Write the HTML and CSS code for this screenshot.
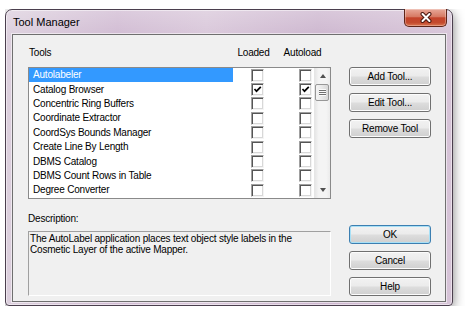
FILE: index.html
```html
<!DOCTYPE html>
<html lang="en">
<head>
  <title>Tool Manager</title>
  <meta charset="utf-8">
  <link rel="stylesheet" href="styles.css">
</head>
<body>
  <div class="window">
    <div class="titlebar">
      <span class="title">Tool Manager</span>
      <button class="close" aria-label="Close">
        <svg width="14" height="11" viewBox="0 0 14 11">
          <path d="M3.5 2 L10.5 9 M10.5 2 L3.5 9" stroke="#4a1810" stroke-width="4" stroke-linecap="round"/>
          <path d="M3.5 2 L10.5 9 M10.5 2 L3.5 9" stroke="#fff" stroke-width="2" stroke-linecap="round"/>
        </svg>
      </button>
    </div>

    <div class="client">
      <div class="main">
        <div class="list-head">
          <span>Tools</span>
          <span>Loaded</span>
          <span>Autoload</span>
        </div>

        <div class="listbox">
          <div class="rows">
            <div class="row selected"><span class="name">Autolabeler</span><span class="cell"><i class="check"></i></span><span class="cell"><i class="check"></i></span></div>
            <div class="row"><span class="name">Catalog Browser</span><span class="cell"><i class="check on"><svg width="9" height="9" viewBox="0 0 9 9"><path d="M1.5 4 L3.5 6.2 L7.8 1.8" fill="none" stroke="#000" stroke-width="1.7"/></svg></i></span><span class="cell"><i class="check on"><svg width="9" height="9" viewBox="0 0 9 9"><path d="M1.5 4 L3.5 6.2 L7.8 1.8" fill="none" stroke="#000" stroke-width="1.7"/></svg></i></span></div>
            <div class="row"><span class="name">Concentric Ring Buffers</span><span class="cell"><i class="check"></i></span><span class="cell"><i class="check"></i></span></div>
            <div class="row"><span class="name">Coordinate Extractor</span><span class="cell"><i class="check"></i></span><span class="cell"><i class="check"></i></span></div>
            <div class="row"><span class="name">CoordSys Bounds Manager</span><span class="cell"><i class="check"></i></span><span class="cell"><i class="check"></i></span></div>
            <div class="row"><span class="name">Create Line By Length</span><span class="cell"><i class="check"></i></span><span class="cell"><i class="check"></i></span></div>
            <div class="row"><span class="name">DBMS Catalog</span><span class="cell"><i class="check"></i></span><span class="cell"><i class="check"></i></span></div>
            <div class="row"><span class="name">DBMS Count Rows in Table</span><span class="cell"><i class="check"></i></span><span class="cell"><i class="check"></i></span></div>
            <div class="row"><span class="name">Degree Converter</span><span class="cell"><i class="check"></i></span><span class="cell"><i class="check"></i></span></div>
          </div>
          <div class="scrollbar">
            <div class="arrow up"></div>
            <div class="thumb"></div>
            <div class="track"></div>
            <div class="arrow down"></div>
          </div>
        </div>

        <div class="desc-label">Description:</div>
        <div class="desc">The AutoLabel application places text object style labels in the<br>Cosmetic Layer of the active Mapper.</div>
      </div>

      <div class="buttons">
        <div class="group">
          <button>Add Tool...</button>
          <button>Edit Tool...</button>
          <button>Remove Tool</button>
        </div>
        <div class="group bottom">
          <button class="default">OK</button>
          <button>Cancel</button>
          <button>Help</button>
        </div>
      </div>
    </div>
  </div>
</body>
</html>
```

FILE: styles.css
```css
* {
  box-sizing: border-box;
}
body {
  margin: 9px 0 0 5px;
  background: #fff;
  font-family: "Liberation Sans", Arial, sans-serif;
  font-size: 10px;
  letter-spacing: -0.2px;
  color: #000;
}

/* window frame */
.window {
  width: 448px;
  height: 297px;
  display: flex;
  flex-direction: column;
  padding: 0 6px 3px;
  border: 1px solid #4b3f4e;
  border-radius: 7px 7px 4px 4px;
  background:
    linear-gradient(rgba(255,255,255,.25), rgba(255,255,255,0) 30px),
    linear-gradient(90deg, #dccfdd, #d0bad2 25%, #d8c6d9 45%, #ccb5ce 70%, #d6c3d7);
  box-shadow: 0 3px 12px rgba(0,0,0,.5), inset 0 0 0 1px rgba(255,255,255,.5);
}
.titlebar {
  height: 24px;
  display: flex;
  align-items: flex-start;
}
.title {
  padding: 6px 0 0 1px;
  font-size: 11px;
  line-height: 13px;
  letter-spacing: 0;
}
.close {
  margin: -1px -1px 0 auto;
  width: 43px;
  height: 18px;
  padding: 0;
  display: flex;
  align-items: center;
  justify-content: center;
  border: 1px solid #5e2418;
  border-top: none;
  border-radius: 0 0 5px 5px;
  background: linear-gradient(#e8a899, #d77a64 45%, #c4432b 52%, #c34a2e 80%, #db7550);
  box-shadow: inset 0 0 0 1px rgba(255,255,255,.3);
}

/* client area */
.client {
  flex: 1;
  display: flex;
  padding-left: 15px;
  background: #f0f0f0;
  border: 1px solid #6f6f6f;
  box-shadow: 0 0 0 1px rgba(255,255,255,.55);
}
.main {
  width: 303px;
  display: flex;
  flex-direction: column;
}
.list-head {
  height: 32px;
  padding-top: 12px;
  display: grid;
  grid-template-columns: 205px 41px 57px;
  line-height: 12px;
}
.list-head span:first-child {
  padding-left: 1px;
}
.list-head span + span {
  text-align: center;
}

/* list with checkbox columns */
.listbox {
  height: 132px;
  display: flex;
  background: #fff;
  border: 1px solid #8a8a8a;
}
.rows {
  flex: 1;
}
.row {
  height: 14.4px;
  display: grid;
  grid-template-columns: 204px 31px 48px;
  align-items: center;
}
.name {
  padding-left: 4px;
  line-height: 14px;
  white-space: nowrap;
}
.row.selected .name {
  background: #3399ff;
  color: #fff;
}
.cell {
  display: flex;
  justify-content: flex-end;
}
.check {
  width: 13px;
  height: 13px;
  display: flex;
  align-items: center;
  justify-content: center;
  background: #fff;
  border: 1px solid;
  border-color: #a0a0a0 #f4f4f4 #f4f4f4 #a0a0a0;
  box-shadow: inset 1px 1px #555, inset -1px -1px #d8d8d8;
}

/* scrollbar */
.scrollbar {
  width: 16px;
  display: flex;
  flex-direction: column;
  border-left: 1px solid #e6e6e6;
  background: linear-gradient(90deg, #e6e6e6, #f4f4f4 25%, #f4f4f4 75%, #ebebeb);
}
.arrow {
  height: 16px;
  display: flex;
  align-items: center;
  justify-content: center;
}
.arrow::before {
  content: "";
  border-left: 3.5px solid transparent;
  border-right: 3.5px solid transparent;
}
.arrow.up::before {
  border-bottom: 4px solid #505050;
}
.arrow.down::before {
  border-top: 4px solid #505050;
}
.thumb {
  height: 17px;
  margin: 0 1px 0 0;
  display: flex;
  align-items: center;
  justify-content: center;
  border: 1px solid #979797;
  border-radius: 2px;
  background: linear-gradient(90deg, #f4f4f4, #e8e8e8 50%, #d8d8d8);
}
.thumb::before {
  content: "";
  width: 7px;
  height: 7px;
  background: repeating-linear-gradient(#fafafa 0 1px, #707070 1px 2px);
}
.track {
  flex: 1;
}

/* description */
.desc-label {
  margin: 14px 0 6px;
  line-height: 12px;
}
.desc {
  height: 65px;
  padding: 1px 0 0 1px;
  line-height: 11px;
  border: 1px solid;
  border-color: #a0a0a0 #fff #fff #a0a0a0;
}

/* buttons */
.buttons {
  width: 82px;
  margin-left: 18px;
  padding-top: 32px;
}
.group {
  display: flex;
  flex-direction: column;
  gap: 7px;
}
.group.bottom {
  margin-top: 87px;
}
.group button {
  height: 19px;
  padding: 0;
  font: 10px "Liberation Sans", Arial, sans-serif;
  letter-spacing: -0.2px;
  color: #000;
  border: 1px solid #707070;
  border-radius: 3px;
  background: linear-gradient(#f2f2f2, #ebebeb 48%, #dddddd 52%, #cfcfcf);
  box-shadow: inset 0 0 0 1px #fcfcfc;
}
.group button.default {
  border-color: #3c7fb1;
  box-shadow: inset 0 0 0 1px #a8e0f6;
}
```
